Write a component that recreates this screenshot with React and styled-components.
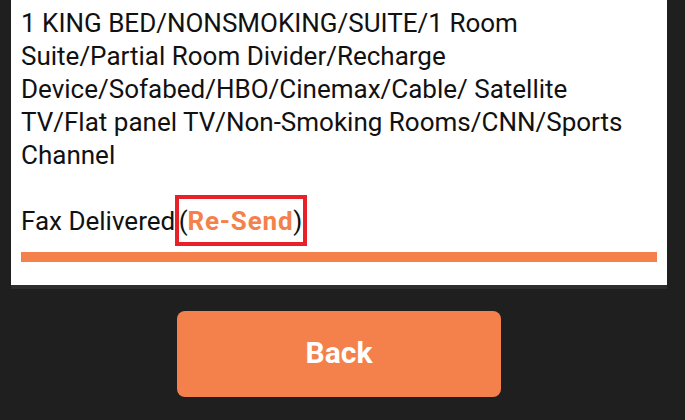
import React from "react";
import styled, { createGlobalStyle } from "styled-components";

const GlobalStyle = createGlobalStyle`
  html, body {
    margin: 0;
    padding: 0;
    background: #1f1f1f;
    font-family: Roboto, "Liberation Sans", Arial, sans-serif;
  }
`;

const Page = styled.div`
  width: 685px;
  height: 420px;
  overflow: hidden;
  background: #1f1f1f;
`;

const Column = styled.div`
  width: 656px;
  margin-left: 11px;
  display: flex;
  flex-direction: column;
  align-items: center;
`;

const Card = styled.div`
  box-sizing: border-box;
  width: 100%;
  background: #ffffff;
  padding: 7px 10px 23px;
  box-shadow: 0 4px 0 #2e2e2e;
`;

const Text = styled.p`
  margin: ${(p) => (p.$spaced ? "33px 0 0" : "0")};
  padding-right: 16px;
  font-size: 26px;
  line-height: 33px;
  color: #111111;
`;

const ResendBox = styled.span`
  margin-left: -3px;
  padding: 7px 1px 6px 0;
  outline: 4px solid #e8202a;
`;

const ResendLink = styled.span`
  color: #f4814b;
  font-weight: 700;
  letter-spacing: 0.8px;
`;

const ProgressBar = styled.div`
  height: 10px;
  margin-top: 14px;
  background: #f4814b;
`;

const BackButton = styled.button`
  margin-top: 26px;
  width: 324px;
  height: 86px;
  padding: 0 0 4px;
  border: none;
  border-radius: 8px;
  background: #f4814b;
  color: #ffffff;
  font-family: Roboto, "Liberation Sans", Arial, sans-serif;
  font-size: 30px;
  font-weight: 700;
  cursor: pointer;
`;

export default function App() {
  return (
    <Page>
      <GlobalStyle />
      <Column>
        <Card>
          <Text>
            1 KING BED/NONSMOKING/SUITE/1 Room Suite/Partial Room Divider/Recharge
            Device/Sofabed/HBO/Cinemax/Cable/ Satellite TV/Flat panel TV/Non-Smoking
            Rooms/CNN/Sports Channel
          </Text>
          <Text $spaced>
            Fax Delivered{" "}
            <ResendBox>
              (<ResendLink>Re-Send</ResendLink>)
            </ResendBox>
          </Text>
          <ProgressBar />
        </Card>
        <BackButton>Back</BackButton>
      </Column>
    </Page>
  );
}
